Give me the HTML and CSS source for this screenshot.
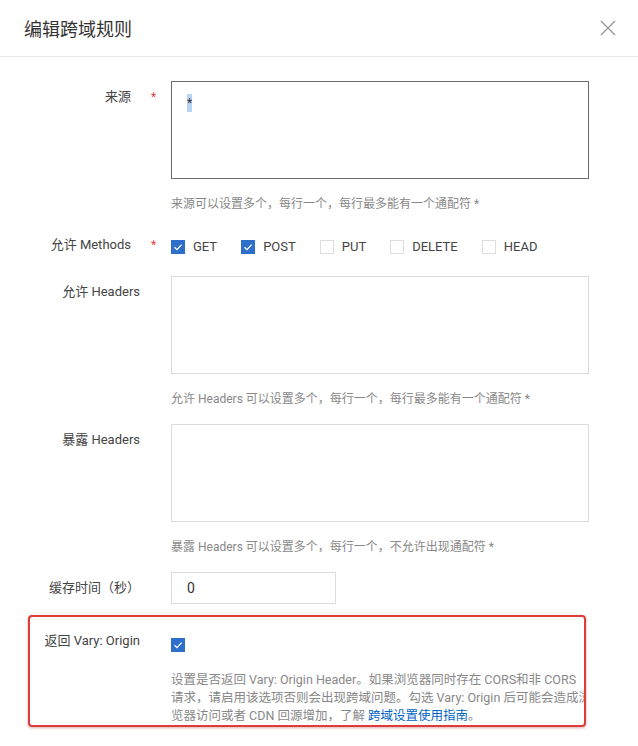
FILE: index.html
```html
<!DOCTYPE html>
<html lang="zh-CN">
<head>
<meta charset="utf-8">
<title>编辑跨域规则</title>
<link rel="stylesheet" href="styles.css">
</head>
<body>
<div class="dialog">
  <div class="dialog-header">
    <h1 class="dialog-title">编辑跨域规则</h1>
    <button class="close" aria-label="关闭">
      <svg width="16" height="16" viewBox="0 0 16 16"><path d="M1 1L15 15M15 1L1 15" stroke="#999" stroke-width="1.4" fill="none"/></svg>
    </button>
  </div>

  <div class="form">
    <div class="item item-origin">
      <div class="label required">来源</div>
      <div class="star">*</div>
      <div class="control">
        <div class="textarea focused"><span class="sel">*</span></div>
        <div class="help">来源可以设置多个，每行一个，每行最多能有一个通配符 *</div>
      </div>
    </div>

    <div class="item item-methods">
      <div class="label required">允许 Methods</div>
      <div class="star">*</div>
      <div class="control options">
        <label class="opt"><span class="cb checked"><svg width="14" height="14" viewBox="0 0 14 14"><path d="M3.5 7.2L6 9.6L10.6 4.6" stroke="#fff" stroke-width="1.3" fill="none"/></svg></span>GET</label>
        <label class="opt"><span class="cb checked"><svg width="14" height="14" viewBox="0 0 14 14"><path d="M3.5 7.2L6 9.6L10.6 4.6" stroke="#fff" stroke-width="1.3" fill="none"/></svg></span>POST</label>
        <label class="opt"><span class="cb"></span>PUT</label>
        <label class="opt"><span class="cb"></span>DELETE</label>
        <label class="opt"><span class="cb"></span>HEAD</label>
      </div>
    </div>

    <div class="item item-allow">
      <div class="label">允许 Headers</div>
      <div class="star"></div>
      <div class="control">
        <div class="textarea"></div>
        <div class="help">允许 Headers 可以设置多个，每行一个，每行最多能有一个通配符 *</div>
      </div>
    </div>

    <div class="item item-expose">
      <div class="label">暴露 Headers</div>
      <div class="star"></div>
      <div class="control">
        <div class="textarea"></div>
        <div class="help">暴露 Headers 可以设置多个，每行一个，不允许出现通配符 *</div>
      </div>
    </div>

    <div class="item item-cache">
      <div class="label">缓存时间（秒）</div>
      <div class="star"></div>
      <div class="control">
        <div class="input">0</div>
      </div>
    </div>

    <div class="vary-box">
      <div class="label vary-label">返回 Vary: Origin</div>
      <div class="vary-check"><span class="cb checked"><svg width="14" height="14" viewBox="0 0 14 14"><path d="M3.5 7.2L6 9.6L10.6 4.6" stroke="#fff" stroke-width="1.3" fill="none"/></svg></span></div>
      <div class="vary-help">设置是否返回 Vary: Origin Header。如果浏览器同时存在 CORS和非 CORS<br>请求，请启用该选项否则会出现跨域问题。勾选 Vary: Origin 后可能会造成浏<br>览器访问或者 CDN 回源增加，了解 <a href="#" class="link">跨域设置使用指南</a>。</div>
    </div>
  </div>
</div>
</body>
</html>
```

FILE: styles.css
```css
* { box-sizing: border-box; }

html, body {
  margin: 0;
  padding: 0;
  background: #fff;
}

body {
  font-family: "Roboto", "Noto Sans CJK SC", sans-serif;
  color: #333;
  width: 638px;
  height: 746px;
  overflow: hidden;
}

.dialog-header {
  height: 57px;
  border-bottom: 1px solid #e6e6e6;
  display: flex;
  align-items: center;
  justify-content: space-between;
  padding: 0 22px 1px 24px;
}

.dialog-title {
  margin: 0;
  font-family: "Noto Sans CJK SC", sans-serif;
  font-size: 18px;
  font-weight: 400;
  line-height: 24px;
  color: #333;
}

.close {
  border: 0;
  background: none;
  padding: 0;
  width: 16px;
  height: 16px;
  display: flex;
}

.form {
  padding-top: 24px;
}

.item {
  display: grid;
  grid-template-columns: 140px 31px 418px;
}

.label {
  font-size: 13px;
  line-height: 18px;
  text-align: right;
  color: #444;
  padding-top: 7px;
  white-space: nowrap;
}

.label.required {
  padding-right: 9px;
}

.star {
  color: #e0433f;
  font-size: 12px;
  line-height: 18px;
  padding-top: 7px;
  padding-left: 11px;
}

.textarea {
  height: 98px;
  border: 1px solid #dcdcdc;
  padding: 12px 15px;
  font-size: 12px;
  line-height: 18px;
  color: #333;
}

.textarea.focused {
  border-color: #6b6b6b;
}

.sel {
  background: #b9d5f6;
  display: inline-block;
  line-height: 18px;
}

.help {
  margin-top: 16px;
  font-size: 12px;
  line-height: 18px;
  color: #888;
  white-space: nowrap;
}

.item-methods {
  margin-top: 23px;
}

.item-methods .label,
.item-methods .star {
  padding-top: 0;
}

.options {
  display: flex;
  padding-top: 2px;
}

.opt {
  display: flex;
  align-items: center;
  font-size: 13px;
  line-height: 18px;
  color: #444;
  margin-right: 24px;
}

.cb {
  width: 14px;
  height: 14px;
  border: 1px solid #dedede;
  background: #fff;
  margin-right: 8px;
  display: inline-flex;
  flex: none;
}

.cb.checked {
  border-color: #2f6fcc;
  background: #2f6fcc;
}

.cb svg {
  margin: -1px;
}

.item-allow {
  margin-top: 20px;
}

.item-expose {
  margin-top: 16px;
}

.item-cache {
  margin-top: 16px;
}

.input {
  width: 165px;
  height: 32px;
  border: 1px solid #dcdcdc;
  padding: 0 15px;
  font-size: 14px;
  line-height: 30px;
  color: #333;
}

.vary-box {
  margin: 11px 0 0 28px;
  width: 558px;
  height: 112px;
  border: 2px solid #df3b3b;
  border-radius: 4px;
  box-shadow: 0 1px 3px rgba(150, 30, 30, 0.35);
  overflow: hidden;
  display: grid;
  grid-template-columns: 110px 31px 1fr;
  grid-template-rows: auto auto;
  padding-top: 8px;
}

.vary-label {
  grid-column: 1;
  grid-row: 1;
}

.vary-check {
  grid-column: 3;
  grid-row: 1;
  padding-top: 12px;
}

.vary-check .cb {
  margin-right: 0;
}

.vary-help {
  grid-column: 3;
  grid-row: 2;
  margin-top: 15px;
  font-size: 12.5px;
  line-height: 18px;
  color: #888;
  white-space: nowrap;
}

.link {
  color: #0064c8;
  text-decoration: none;
}
```
